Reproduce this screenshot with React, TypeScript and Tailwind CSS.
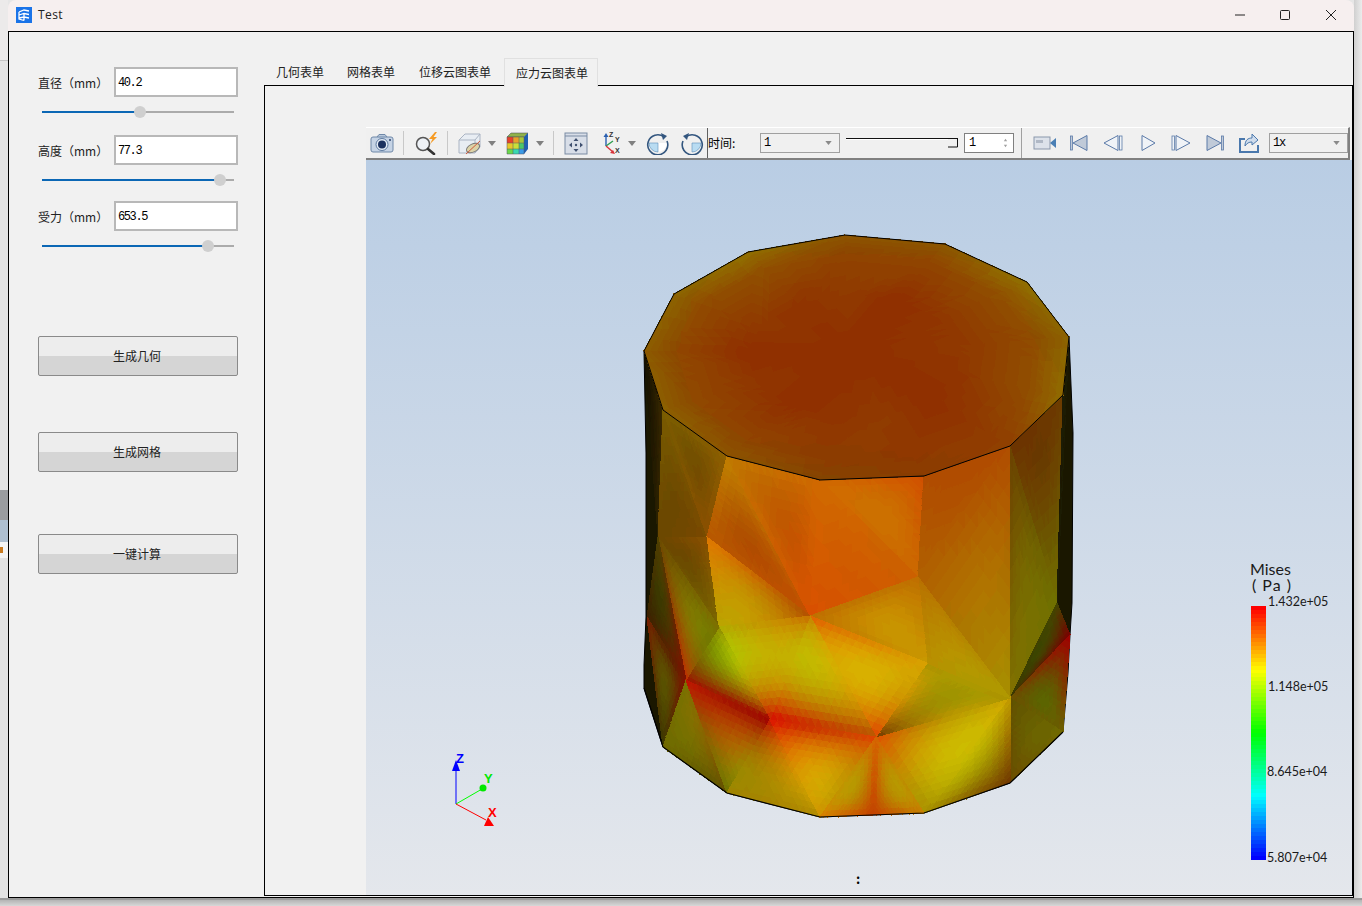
import React from 'react'

type P = [number, number]

const hex = (c: string) => [parseInt(c.slice(1, 3), 16), parseInt(c.slice(3, 5), 16), parseInt(c.slice(5, 7), 16)]
const mixHex = (a: string, b: string, t: number) => {
  const [x, y] = [hex(a), hex(b)]
  return '#' + [0, 1, 2].map((k) => Math.round(x[k] + (y[k] - x[k]) * t).toString(16).padStart(2, '0')).join('')
}

const pA: P = [658, 537]
const pB: P = [707, 537]
const pC: P = [719, 627]
const pD: P = [810, 616]
const pE: P = [927, 663]
const pF: P = [1010, 698]
const pG: P = [918, 577]
const pH: P = [1057, 603]
const pI: P = [686, 680]
const pJ: P = [770, 720]
const pK: P = [876, 737]
const pL: P = [1070, 635]
const pM: P = [647, 617]
const pN: P = [873, 815]

const T: P[] = [
  [644, 351], [674, 294], [748, 252], [845, 235], [945, 244], [1027, 282], [1069, 337],
  [1063, 395], [1010, 446], [924, 476], [820, 480], [727, 456], [663, 410],
]
const topCols = [
  '#8a5c00', '#8c6400', '#8f7000', '#8a5400', '#8c5600', '#8f7000', '#8a6400',
  '#8f6c00', '#924000', '#8a3c00', '#844400', '#8a5400', '#8a6000',
]
const blotches = [
  '#8f2e00', '#923800', '#923400', '#923a00', '#8f2e00', '#923600', '#8f3800',
  '#923400', '#8f2e00', '#923a00', '#923400', '#8f3000', '#923600',
]
const B: P[] = [[644, 688], [663, 747], [727, 793], [820, 817], [924, 813], [1010, 783], [1063, 732]]

// colours half way along the edges of the lower band, shared by the facets on both sides
const edgeKey = (p: P, q: P) => [p.join(','), q.join(',')].sort().join('|')
const edgeMids = new Map<string, string>([
  [edgeKey(pD, pJ), '#c4ac00'],
  [edgeKey(pD, pK), '#d8a800'],
  [edgeKey(pC, pJ), '#b8b000'],
  [edgeKey(pC, pI), '#7a7000'],
  [edgeKey(pC, pD), '#c49000'],
  [edgeKey(pJ, pK), '#c83000'],
  [edgeKey(pJ, B[3]), '#d89000'],
  [edgeKey(pK, B[3]), '#c09000'],
  [edgeKey(pK, B[4]), '#c08800'],
  [edgeKey(pK, pF), '#b89000'],
  [edgeKey(pE, pK), '#d09000'],
  [edgeKey(pE, pF), '#b09800'],
  [edgeKey(pI, pJ), '#a01000'],
  [edgeKey(pI, B[2]), '#8a6000'],
  [edgeKey(pJ, B[2]), '#a07a00'],
  [edgeKey(pM, pI), '#5a2000'],
  [edgeKey(pF, B[4]), '#c8b800'],
])

// one facet, split up so the colour can run smoothly between its corners, edges and middle
function facet(a: P, b: P, c: P, ca: string, cb: string, cc: string, cm: string | null, n = 14) {
  const [ra, rb, rc] = [hex(ca), hex(cb), hex(cc)]
  const edge = (p: P, q: P, x: number[], y: number[]) => {
    const o = edgeMids.get(edgeKey(p, q))
    return o ? hex(o) : x.map((v, k) => (v + y[k]) / 2)
  }
  const [ab, bc, ca2] = [edge(a, b, ra, rb), edge(b, c, rb, rc), edge(c, a, rc, ra)]
  const rm = cm ? hex(cm) : null
  const out: { points: string; fill: string }[] = []
  const at = (i: number, j: number): P => {
    const u = i / n
    const v = j / n
    const w = 1 - u - v
    return [a[0] * w + b[0] * u + c[0] * v, a[1] * w + b[1] * u + c[1] * v]
  }
  const col = (u: number, v: number) => {
    const w = 1 - u - v
    const rgb = [0, 1, 2].map((k) => {
      let val =
        ra[k] * w * (2 * w - 1) + rb[k] * u * (2 * u - 1) + rc[k] * v * (2 * v - 1) +
        4 * (ab[k] * w * u + bc[k] * u * v + ca2[k] * v * w)
      if (rm) {
        const centre = (-(ra[k] + rb[k] + rc[k]) + 4 * (ab[k] + bc[k] + ca2[k])) / 9
        val += 27 * u * v * w * (rm[k] - centre)
      }
      return Math.max(0, Math.min(255, Math.round(val / 4) * 4))
    })
    return `rgb(${rgb.join(',')})`
  }
  const s = (p: P[]) => p.map((q) => q.map((x) => x.toFixed(1)).join(',')).join(' ')
  for (let i = 0; i < n; i++) {
    for (let j = 0; j < n - i; j++) {
      out.push({ points: s([at(i, j), at(i + 1, j), at(i, j + 1)]), fill: col((i + 0.33) / n, (j + 0.33) / n) })
      if (i + j < n - 1) {
        out.push({ points: s([at(i + 1, j), at(i + 1, j + 1), at(i, j + 1)]), fill: col((i + 0.67) / n, (j + 0.67) / n) })
      }
    }
  }
  return out
}

const sideFacets: [P, P, P, string, string, string, string][] = [
  [T[0], T[12], pA, '#120f00', '#3a2800', '#2a2000', '#241a00'],
  [T[12], pA, pB, '#7a5c00', '#6a4600', '#7a4a00', '#6e4a00'],
  [T[12], T[11], pB, '#7a5c00', '#8f6000', '#8a5000', '#744e00'],
  [pA, pB, pC, '#6a4600', '#8a5000', '#7a6600', '#6e4c00'],
  [T[11], pB, pD, '#c08000', '#b85800', '#c05000', '#b05000'],
  [T[11], T[10], pD, '#c07800', '#d06a00', '#d85000', '#c05800'],
  [T[10], T[9], pG, '#d06a00', '#d05000', '#cc6800', '#cc7000'],
  [T[10], pG, pD, '#d06a00', '#cc6000', '#d85000', '#d05c00'],
  [T[9], T[8], pG, '#b04c00', '#b04c00', '#b06000', '#b05000'],
  [T[8], pF, pG, '#b04c00', '#a89000', '#b06000', '#b07000'],
  [T[7], T[8], pH, '#6b3a00', '#6b3200', '#707000', '#6a4000'],
  [T[8], pF, pH, '#6a4000', '#807000', '#6f7000', '#786a00'],
  [T[6], T[7], pH, '#1c1a02', '#1c1a02', '#1c1a02', '#1c1a02'],
  [pF, pH, pL, '#3a3a00', '#444400', '#7a0000', '#444000'],
  [pF, pL, B[6], '#6a5000', '#a00000', '#6a6000', '#5e5c00'],
  [pF, B[5], B[6], '#605000', '#6a4c00', '#706a00', '#6a6000'],
  [pF, pK, B[4], '#d0a000', '#e05000', '#a89000', '#ccb000'],
  [pF, B[4], B[5], '#c09800', '#a89000', '#703800', '#a89800'],
  [pE, pF, pK, '#a89000', '#a89000', '#703800', '#a09000'],
  [pG, pE, pF, '#b87000', '#b89000', '#b09a00', '#b89000'],
  [pD, pG, pE, '#c07000', '#c07000', '#c89800', '#c89000'],
  [pD, pE, pK, '#e06000', '#d8a000', '#e04000', '#d8b000'],
  [pD, pJ, pK, '#c88000', '#d80800', '#b85000', '#c0a000'],
  [pB, pC, pD, '#e07800', '#b8a400', '#b05000', '#c49000'],
  [pC, pJ, pD, '#b0a800', '#d01000', '#c87000', '#c4b000'],
  [pI, pC, pJ, '#a01000', '#949000', '#a00000', '#8c8000'],
  [pA, pC, pI, '#6a4a00', '#807000', '#c03000', '#847200'],
  [pA, pM, pI, '#504000', '#3a2000', '#801000', '#403800'],
  [pM, pI, B[1], '#7a2000', '#801000', '#3a3a00', '#5a5000'],
  [pI, B[1], B[2], '#7a7000', '#6f6a00', '#5f5000', '#7a6f00'],
  [pI, pJ, B[2], '#c01000', '#a00000', '#707000', '#b05000'],
  [pJ, B[2], B[3], '#c01000', '#a08000', '#b08800', '#b08800'],
  [pJ, pK, B[3], '#e01000', '#e04000', '#d09000', '#d89000'],
  [pK, B[3], pN, '#d86000', '#d88000', '#c44000', '#b89000'],
  [pK, pN, B[4], '#d86000', '#c44000', '#c88000', '#b89000'],
]

const ring = (p: P, f: number): P => [850 + (p[0] - 850) * f, 355 + (p[1] - 355) * f]

const topFacets = T.flatMap((p, i) => {
  const k = (i + 1) % T.length
  const q = T[k]
  const [o1, o2] = [ring(p, 0.84), ring(q, 0.84)]
  const [m1, m2] = [ring(p, 0.5), ring(q, 0.5)]
  const [c1, c2] = [mixHex(topCols[i], '#923600', 0.55), mixHex(topCols[k], '#923600', 0.55)]
  return [
    ...facet(p, q, o1, topCols[i], topCols[k], c1, null, 5),
    ...facet(o1, q, o2, c1, topCols[k], c2, null, 5),
    ...facet(o1, o2, m1, c1, c2, blotches[i], null, 6),
    ...facet(m1, o2, m2, blotches[i], c2, blotches[k], null, 6),
    ...facet(m1, m2, [850, 355], blotches[i], blotches[k], '#8f2e00', null, 5),
  ]
})
const meshFacets = sideFacets.flatMap((f) => facet(...f))

const line = (pts: P[]) => pts.map((p) => p.join(',')).join(' ')

function Mesh() {
  const silhouette: P[] = [
    T[0], [646, 453], [646, 617], [644, 665], ...B, [1068, 673], pL, [1072, 603], [1073, 433], T[6],
  ]
  return (
    <svg viewBox="366 160 986 735" className="absolute inset-0 w-[986px] h-[735px]">
      <polygon points={line(silhouette)} fill="#1a1700" stroke="#000" strokeWidth="1" />
      <g shapeRendering="crispEdges">
        {meshFacets.map((f, i) => (
          <polygon key={i} points={f.points} fill={f.fill} stroke={f.fill} strokeWidth="1" />
        ))}
        {topFacets.map((f, i) => (
          <polygon key={i} points={f.points} fill={f.fill} stroke={f.fill} strokeWidth="1" />
        ))}
      </g>
      <polygon points={line(T)} fill="none" stroke="#000" strokeWidth="1" />
      <polyline points={line(B)} fill="none" stroke="#000" strokeWidth="1.2" />
      {/* axes */}
      <g strokeWidth="1">
        <line x1="456" y1="804" x2="456" y2="768" stroke="#0000ff" />
        <path d="M456 760l4 11h-8z" fill="#0000ff" />
        <line x1="456" y1="804" x2="482" y2="789" stroke="#00ff00" />
        <circle cx="483" cy="788" r="3.500" fill="#00e800" />
        <line x1="456" y1="804" x2="486" y2="820" stroke="#ff0000" />
        <path d="M488 817l6 9h-10z" fill="#ff0000" />
      </g>
      <g fontFamily="'Liberation Sans', sans-serif" fontSize="13" fontWeight="700">
        <text x="456" y="763" fill="#0000ff">Z</text>
        <text x="484" y="783" fill="#00e800">Y</text>
        <text x="488" y="817" fill="#ff0000">X</text>
      </g>
    </svg>
  )
}

const bandColor = (t: number) => {
  const stops = [[255, 0, 0], [255, 255, 0], [0, 255, 0], [0, 255, 255], [0, 0, 255]]
  const x = Math.min(t * 4, 3.999)
  const i = Math.floor(x)
  const f = x - i
  return `rgb(${stops[i].map((v, k) => Math.round(v + (stops[i + 1][k] - v) * f)).join(',')})`
}

function Legend() {
  return (
    <div className="absolute left-[885px] top-[401px] w-[90px] text-[#1a1a1a] font-['Lato',sans-serif]">
      <div className="text-[16px] leading-[16px] -ml-[1px]">Mises</div>
      <div className="text-[16px] leading-[16px] ml-[1px] tracking-[1px]">( Pa )</div>
      <div className="flex mt-[13px]">
        <div className="flex flex-col w-[15px] h-[254px] shrink-0">
          {Array.from({ length: 64 }).map((_, i) => (
            <div key={i} className="flex-1" style={{ background: bandColor(i / 63) }} />
          ))}
        </div>
        <div className="relative flex-1 text-[12.500px] leading-[16px]">
          <div className="absolute left-[2px] top-[-12px]">1.432e+05</div>
          <div className="absolute left-[2px] top-[73px]">1.148e+05</div>
          <div className="absolute left-[1px] top-[158px]">8.645e+04</div>
          <div className="absolute left-[1px] top-[244px]">5.807e+04</div>
        </div>
      </div>
    </div>
  )
}

function Field({ label, value }: { label: string; value: string }) {
  return (
    <div className="flex items-center h-[30px]">
      <span className="w-[76px] pt-[2px] text-[12px] text-[#222]">{label}</span>
      <div className="w-[124px] h-[30px] bg-white border-2 border-[#b8b8b8] pl-[2px] pt-[1px] flex items-center font-['Liberation_Mono',monospace] text-[12px] tracking-[-1.400px] text-black">
        {value}
      </div>
    </div>
  )
}

function Slider({ pct, className }: { pct: number; className: string }) {
  return (
    <div className={`flex items-center ${className}`}>
      <div className="relative ml-[4px] w-[192px] h-[2px] bg-[#ababab]">
        <div className="absolute left-0 top-0 h-[2px] bg-[#0b67b5]" style={{ width: `${pct}%` }} />
        <div
          className="absolute top-[-5px] w-[12px] h-[12px] -ml-[6px] rounded-full bg-[#cfcfcf]"
          style={{ left: `${pct}%` }}
        />
      </div>
    </div>
  )
}

function PushButton({ label, className }: { label: string; className: string }) {
  return (
    <button
      className={`relative w-[200px] h-[40px] pr-[2px] rounded-[2px] border border-[#8a8a8a] bg-[linear-gradient(#ededed_0,#ededed_51%,#d5d5d5_51%,#d5d5d5_100%)] text-[12px] text-[#222] ${className}`}
    >
      {label}
    </button>
  )
}

function Caret({ className }: { className: string }) {
  return (
    <svg viewBox="0 0 8 5" className={`w-[8px] h-[5px] shrink-0 ${className}`}>
      <path d="M0 0h8L4 5z" fill="#808080" />
    </svg>
  )
}

function Sep({ className }: { className: string }) {
  return <div className={`w-px h-[24px] bg-[#c8c8c8] shrink-0 ${className}`} />
}

function Icon({ className, children }: { className: string; children: React.ReactNode }) {
  return (
    <svg viewBox="0 0 24 24" className={`w-[24px] h-[24px] shrink-0 ${className}`}>
      {children}
    </svg>
  )
}

function Combo({ value, className }: { value: string; className: string }) {
  return (
    <div className={`h-[20px] border border-[#a0a0a0] flex items-center justify-between pl-[3px] pr-[7px] font-['Liberation_Mono',monospace] text-[12px] tracking-[-1.200px] text-black shrink-0 ${className}`}>
      <span>{value}</span>
      <svg viewBox="0 0 8 5" className="w-[7px] h-[4px]"><path d="M0 0h8L4 5z" fill="#8a8a8a" /></svg>
    </div>
  )
}

function Toolbar() {
  const blue = '#5b7aa8'
  return (
    <div className="relative h-[33px] flex items-center pl-[4px] bg-[#f0f0f0] border-t border-t-white border-b-2 border-b-[#808080] border-r-2 border-r-[#808080] mr-[2px] shrink-0">
      {/* camera */}
      <Icon className="">
        <path d="M7 6l2-2.500h6L17 6" fill="#b8c8dc" stroke="#6f88a8" />
        <rect x="1" y="6" width="22" height="15" rx="2" fill="#c5d3e5" stroke="#6f88a8" />
        <circle cx="12" cy="13.500" r="6" fill="#e4ecf5" stroke="#5d7aa0" />
        <circle cx="12" cy="13.500" r="4" fill="#1c3260" />
        <circle cx="20" cy="9" r="0.900" fill="#1c3260" />
      </Icon>
      <Sep className="ml-[9px]" />
      {/* lens with bolt */}
      <Icon className="ml-[10px]">
        <circle cx="9" cy="13" r="6.500" fill="#eef2f7" stroke="#555" strokeWidth="1.500" />
        <path d="M14 18l6 5" stroke="#333" strokeWidth="2.600" strokeLinecap="round" />
        <path d="M21 1l-6 7h3.500l-2.500 5 7-7h-3.500L23 1z" fill="#f59a23" />
      </Icon>
      <Sep className="ml-[9px]" />
      {/* faded cube with cut */}
      <Icon className="ml-[10px]">
        <path d="M1 9l6-6h15v13l-5 6H1z" fill="#e8edf3" stroke="#aab4c3" />
        <path d="M1 9h16v13M17 9l5-6" fill="none" stroke="#aab4c3" />
        <ellipse cx="15" cy="17" rx="7" ry="4" transform="rotate(-25 15 17)" fill="#dcd3a8" stroke="#777" />
        <path d="M8 23L22 10" stroke="#d2583a" strokeWidth="1" />
      </Icon>
      <Caret className="ml-[6px]" />
      {/* colour cube */}
      <Icon className="ml-[9px]">
        <path d="M2 6l4-4h17l-4 4z" fill="#8fb24a" stroke="#445" strokeWidth="0.500" />
        <path d="M19 6l4-4v16l-4 5z" fill="#1f5fb0" />
        <rect x="2" y="6" width="6" height="6" fill="#e8402a" />
        <rect x="8" y="6" width="6" height="6" fill="#e8a02a" />
        <rect x="14" y="6" width="5" height="6" fill="#a8c83a" />
        <rect x="2" y="12" width="6" height="6" fill="#e8c82a" />
        <rect x="8" y="12" width="6" height="6" fill="#c8e03a" />
        <rect x="14" y="12" width="5" height="6" fill="#4ac86a" />
        <rect x="2" y="18" width="6" height="5" fill="#6ad84a" />
        <rect x="8" y="18" width="6" height="5" fill="#3ad8b0" />
        <rect x="14" y="18" width="5" height="5" fill="#3a9ae8" />
        <path d="M2 6h17v17H2zM8 6v17M14 6v17M2 12h17M2 18h17" fill="none" stroke="#556" strokeWidth="0.500" />
      </Icon>
      <Caret className="ml-[7px]" />
      <Sep className="ml-[9px]" />
      {/* fit to view */}
      <Icon className="ml-[10px]">
        <rect x="1" y="2" width="22" height="21" fill="#d8dee8" stroke="#7a8ba3" />
        <path d="M1 5h22" stroke="#7a8ba3" />
        <path d="M12 7l2.500 3h-5zM12 21l-2.500-3h5zM5 14l3-2.500v5zM19 14l-3 2.500v-5z" fill="#3f5070" />
        <circle cx="12" cy="14" r="1.200" fill="#3f5070" />
      </Icon>
      {/* axes */}
      <svg viewBox="0 0 22 24" className="w-[22px] h-[24px] shrink-0 ml-[12px]">
        <path d="M6 15V5" stroke="#2a5fb0" strokeWidth="1.400" />
        <path d="M6 2l2.500 4h-5z" fill="#2a5fb0" />
        <path d="M6 15l7-5" stroke="#2f9e4f" strokeWidth="1.400" />
        <path d="M6 15l7 6" stroke="#d8323a" strokeWidth="1.400" />
        <path d="M15 23l-5-1 3-3z" fill="#d8323a" />
        <g fontFamily="'Liberation Sans', sans-serif" fontSize="7" fontWeight="700" fill="#333">
          <text x="9" y="6">Z</text>
          <text x="15" y="11">Y</text>
          <text x="15" y="22">X</text>
        </g>
      </svg>
      <Caret className="ml-[6px]" />
      {/* rotate right */}
      <Icon className="ml-[10px]">
        <path d="M12 12h9A9 9 0 0 1 12 21z" fill="#fff" />
        <path d="M12 12v9a9 9 0 0 1-9-9z" fill="#b9dcf2" stroke="#5b8fb8" strokeWidth="0.600" />
        <path d="M18 5a10 10 0 1 0 3 4" transform="translate(0 1)" fill="none" stroke="#33567f" strokeWidth="1.600" />
        <path d="M15 2l6 3-4 4z" fill="#33567f" />
      </Icon>
      {/* rotate left */}
      <Icon className="ml-[10px]">
        <path d="M12 12h9a9 9 0 0 1-9 9z" fill="#b9dcf2" stroke="#5b8fb8" strokeWidth="0.600" />
        <path d="M6 5a10 10 0 1 1-3 4" transform="translate(0 1)" fill="none" stroke="#33567f" strokeWidth="1.600" />
        <path d="M9 2L3 5l4 4z" fill="#33567f" />
      </Icon>
      <div className="ml-[3px] w-px h-full bg-[#606060] shrink-0" />
      <span className="text-[12px] text-black w-[29px] shrink-0">时间:</span>
      <Combo value="1" className="ml-[23px] w-[80px]" />
      {/* time slider */}
      <svg viewBox="0 0 112 10" className="ml-[6px] w-[112px] h-[10px] shrink-0">
        <path d="M0 .5h112" stroke="#111" strokeWidth="1" />
        <path d="M0 1.500h102" stroke="#fff" strokeWidth="1" />
        <path d="M111.500 1v8H102" fill="none" stroke="#111" strokeWidth="1" />
      </svg>
      <div className="ml-[6px] w-[50px] h-[20px] shrink-0 bg-white border border-[#808080] flex items-center justify-between pl-[4px] pr-[5px] font-['Liberation_Mono',monospace] text-[12px] text-black">
        <span>1</span>
        <svg viewBox="0 0 6 12" className="w-[5px] h-[10px]"><path d="M3 1l2 3H1zM3 11L1 8h4z" fill="#a0a0a0" /></svg>
      </div>
      <div className="ml-[7px] w-px h-full bg-[#a0a0a0] shrink-0" />
      {/* video camera */}
      <Icon className="ml-[11px]">
        <rect x="1" y="6" width="16" height="12" fill="#dde2ea" stroke="#8a97ab" />
        <rect x="3" y="9" width="7" height="3" fill="#b0b8c5" />
        <path d="M17 12l6-5v10z" fill="#4a7fb5" />
      </Icon>
      {/* first */}
      <Icon className="ml-[10px]">
        <rect x="3.500" y="5" width="2" height="14" fill="#c0cad8" stroke={blue} strokeWidth="0.800" />
        <path d="M20 4.500v15L6 12z" fill="#c0cad8" stroke={blue} strokeWidth="1" />
      </Icon>
      {/* previous */}
      <Icon className="ml-[10px]">
        <path d="M17 4.500v15L3 12z" fill="#f0f3f7" stroke={blue} strokeWidth="1" />
        <rect x="18.500" y="5" width="2.500" height="14" fill="#f0f3f7" stroke={blue} strokeWidth="0.800" />
      </Icon>
      {/* play */}
      <Icon className="ml-[11px]">
        <path d="M6 4.500v15L19 12z" fill="#f0f3f7" stroke={blue} strokeWidth="1" />
      </Icon>
      {/* next */}
      <Icon className="ml-[9px]">
        <rect x="3" y="5" width="2.500" height="14" fill="#f0f3f7" stroke={blue} strokeWidth="0.800" />
        <path d="M7 4.500v15L21 12z" fill="#f0f3f7" stroke={blue} strokeWidth="1" />
      </Icon>
      {/* last */}
      <Icon className="ml-[10px]">
        <path d="M4 4.500v15L18 12z" fill="#c0cad8" stroke={blue} strokeWidth="1" />
        <rect x="18.500" y="5" width="2" height="14" fill="#c0cad8" stroke={blue} strokeWidth="0.800" />
      </Icon>
      {/* export */}
      <Icon className="ml-[10px]">
        <path d="M8 8H3v13h18v-7" fill="none" stroke="#4a78ad" strokeWidth="2" />
        <path d="M8 15c0-6 3-8 7-8V3l6 6-6 5v-3c-3 0-5 1-7 4z" fill="#cfdcec" stroke="#4a78ad" strokeWidth="1" />
      </Icon>
      <Combo value="1x" className="ml-[8px] w-[79px]" />
    </div>
  )
}

export default function App() {
  return (
    <div className="w-[1362px] h-[906px] flex flex-col overflow-hidden bg-[#e6e6e6] font-['Noto_Sans_CJK_SC','Noto_Sans',sans-serif]">
      <div className="flex h-[898px]">
        {/* what shows of the desktop on the left */}
        <div className="w-[8px] flex flex-col shrink-0">
          <div className="h-[61px] bg-[#eceaea] border-b border-b-[#c4c4c4]" />
          <div className="h-[429px] bg-[#e4e4e4]" />
          <div className="h-[30px] bg-[#9a9c9f]" />
          <div className="h-[22px] bg-[#aebfd0]" />
          <div className="h-[16px] bg-[#f4f4f4] flex items-center">
            <div className="w-[3px] h-[6px] bg-[#c87a20]" />
          </div>
          <div className="flex-1 bg-[#e2e2e2]" />
        </div>

        <div className="w-[1346px] h-[898px] flex flex-col rounded-t-[8px] overflow-hidden bg-[#f6efef] shrink-0">
          {/* title bar */}
          <div className="h-[31px] flex items-center shrink-0 pl-[8px] pb-px">
            <svg viewBox="0 0 16 16" className="w-[16px] h-[16px] shrink-0">
              <rect width="16" height="16" fill="#1a73e8" />
              <path d="M3 5l5-2 5 1M3 8l5-1.500 5 1M3 11l5-1 5 1M3 5v7l5 1.500M8 6.500v7" fill="none" stroke="#fff" strokeWidth="1.300" />
            </svg>
            <span className="ml-[6px] text-[12px] tracking-[0.4px] text-[#222] font-['Open_Sans',sans-serif]">Test</span>
            <svg viewBox="0 0 10 10" className="w-[10px] h-[10px] ml-auto mr-[35px]">
              <path d="M0 5h10" stroke="#222" strokeWidth="1" />
            </svg>
            <svg viewBox="0 0 10 10" className="w-[10px] h-[10px] mr-[36px]">
              <rect x=".5" y=".5" width="9" height="9" rx="1" fill="none" stroke="#222" strokeWidth="1" />
            </svg>
            <svg viewBox="0 0 10 10" className="w-[10px] h-[10px] mr-[18px]">
              <path d="M0 0l10 10M10 0L0 10" stroke="#222" strokeWidth="1" />
            </svg>
          </div>

          <div className="flex-1 flex min-h-0 border border-black bg-[#f1f1f1]">
            {/* form column */}
            <div className="w-[255px] shrink-0 pl-[29px] pt-[35px] flex flex-col">
              <Field label="直径（mm）" value="40.2" />
              <Slider pct={51} className="h-[38px] pb-[8px]" />
              <Field label="高度（mm）" value="77.3" />
              <Slider pct={92.500} className="h-[36px] pb-[6px]" />
              <Field label="受力（mm）" value="653.5" />
              <Slider pct={86.500} className="h-[30px]" />
              <PushButton label="生成几何" className="mt-[75px]" />
              <PushButton label="生成网格" className="mt-[56px]" />
              <PushButton label="一键计算" className="mt-[62px]" />
            </div>

            {/* tabs */}
            <div className="flex-1 min-w-0 flex flex-col pt-[26px] pb-px">
              <div className="flex h-[27px] shrink-0 text-[12px] text-[#222] leading-[28px]">
                <span className="ml-[12px] w-[48px]">几何表单</span>
                <span className="ml-[23px] w-[48px]">网格表单</span>
                <span className="ml-[24px] w-[72px]">位移云图表单</span>
                <div className="ml-[13px] w-[94px] h-[29px] pl-[11px] leading-[27px] bg-[#f1f1f1] border-t border-x border-[#e0e0e0] relative z-10">
                  应力云图表单
                </div>
              </div>
              <div className="flex-1 min-h-0 border border-black pl-[101px] pt-[41px] flex flex-col bg-[#f1f1f1]">
                <Toolbar />
                <div className="relative flex-1 min-h-0 bg-linear-to-b from-[#b9cde4] to-[#e4e7ec]">
                  <Mesh />
                  <Legend />
                  <span className="absolute left-[490px] top-[709px] text-[13px] leading-[20px] font-bold text-black">:</span>
                </div>
              </div>
            </div>
          </div>
        </div>

        <div className="flex-1 bg-linear-to-r from-[#d0d0d0] to-[#ececec]" />
      </div>

      {/* shadow under the window */}
      <div className="flex-1 bg-linear-to-b from-[#b4b4b4] to-[#d8d8d8] border-t-2 border-t-[#9a9a9a]" />
    </div>
  )
}
